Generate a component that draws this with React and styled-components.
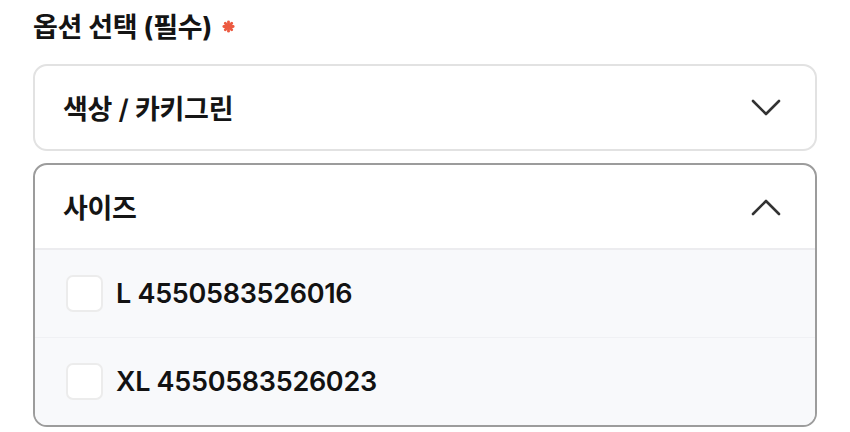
import React from "react";
import styled, { createGlobalStyle } from "styled-components";

const Global = createGlobalStyle`
  html, body { margin: 0; padding: 0; background: #ffffff; }
  body { font-family: "Inter", "Noto Sans CJK KR", sans-serif; color: #111; }
`;

const Page = styled.div`
  padding: 7px 33px 0 33px;
  display: flex;
  flex-direction: column;
`;

const Title = styled.h2`
  margin: 0 0 21px 0;
  height: 36px;
  display: flex;
  align-items: center;
  gap: 10px;
  font-size: 27px;
  font-weight: 700;
  letter-spacing: -0.3px;
  color: #141414;
`;

const Required = styled.svg`
  width: 13px;
  height: 13px;
  margin-top: 2px;
`;

const Box = styled.div`
  border: 2px solid ${(p) => (p.$open ? "#9c9c9c" : "#e2e2e2")};
  border-radius: 14px;
  overflow: hidden;
  background: #fff;
  margin-bottom: ${(p) => (p.$open ? "0" : "12px")};
`;

const Header = styled.div`
  height: 83px;
  display: flex;
  align-items: center;
  justify-content: space-between;
  padding: 0 34px 0 28px;
  font-size: 27px;
  font-weight: 600;
  letter-spacing: -0.3px;
  color: #151515;
  border-bottom: ${(p) => (p.$open ? "2px solid #ececef" : "none")};
`;

const List = styled.div`
  background: #f8f9fb;
  display: flex;
  flex-direction: column;
`;

const Row = styled.label`
  height: 87px;
  display: flex;
  align-items: center;
  gap: 13px;
  padding: 0 0 0 31px;
  font-size: 27px;
  font-weight: 600;
  color: #121212;
  letter-spacing: -0.3px;
  & + & {
    border-top: 1px solid #f0f1f4;
  }
`;

const Check = styled.span`
  width: 33px;
  height: 33px;
  border: 2px solid #ececec;
  border-radius: 7px;
  background: #fff;
  flex-shrink: 0;
`;

const Chevron = ({ up }) => (
  <svg width="30" height="18" viewBox="0 0 30 18" fill="none">
    <path
      d={up ? "M2 16 L15 3 L28 16" : "M2 2 L15 15 L28 2"}
      stroke="#333"
      strokeWidth="2.6"
      strokeLinecap="round"
      strokeLinejoin="round"
    />
  </svg>
);

export default function App() {
  return (
    <>
      <Global />
      <Page>
        <Title>
          옵션 선택 (필수)
          <Required viewBox="0 0 14 14" aria-label="필수">
            <g stroke="#ec5a41" strokeWidth="3" strokeLinecap="round">
              <path d="M7 2 L7 12" />
              <path d="M2 7 L12 7" />
              <path d="M3.5 3.5 L10.5 10.5" />
              <path d="M10.5 3.5 L3.5 10.5" />
            </g>
          </Required>
        </Title>
        <Box>
          <Header>
            색상 / 카키그린
            <Chevron />
          </Header>
        </Box>
        <Box $open>
          <Header $open>
            사이즈
            <Chevron up />
          </Header>
          <List>
            <Row>
              <Check />
              L 4550583526016
            </Row>
            <Row>
              <Check />
              XL 4550583526023
            </Row>
          </List>
        </Box>
      </Page>
    </>
  );
}
